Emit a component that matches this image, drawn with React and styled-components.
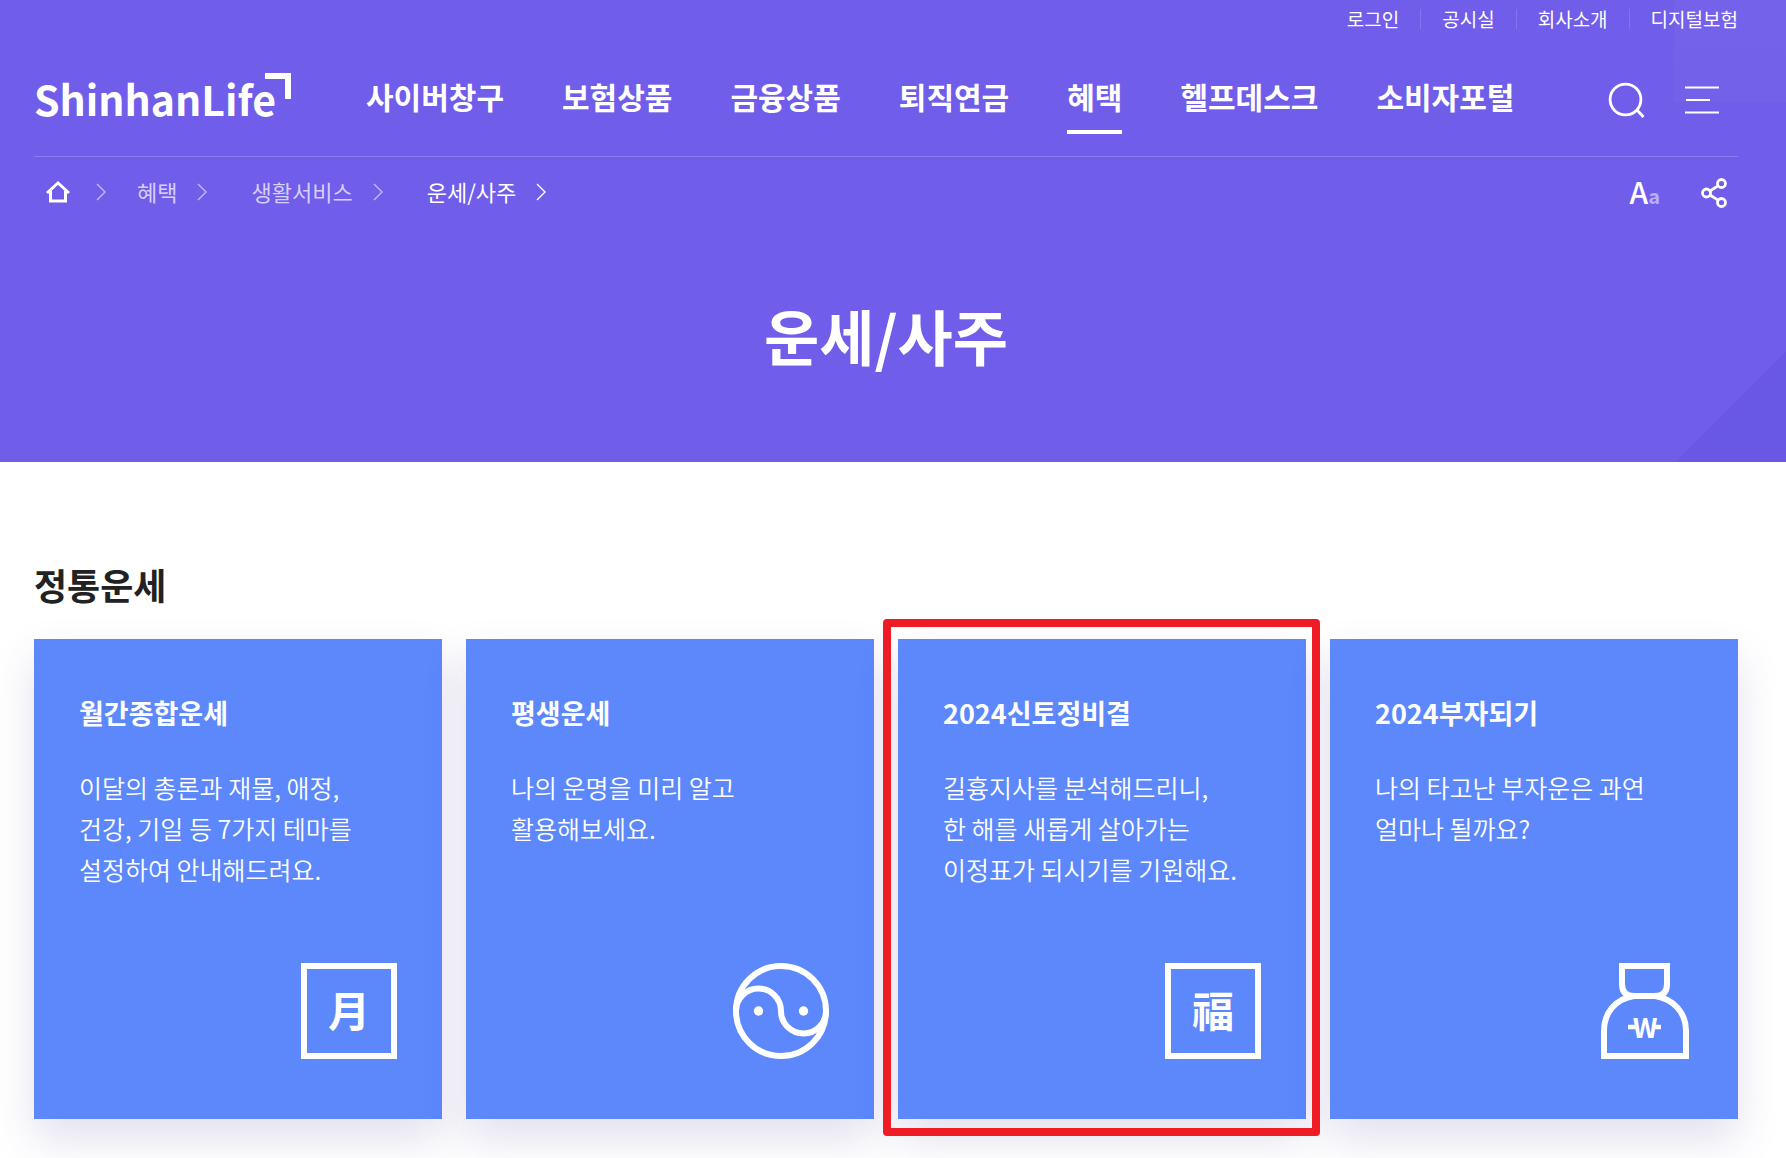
import React from "react";
import styled, { createGlobalStyle } from "styled-components";

const GlobalStyle = createGlobalStyle`
  * { box-sizing: border-box; }
  body {
    margin: 0;
    background: #fff;
    color: #222;
    font-family: "Noto Sans CJK KR", "Noto Sans", sans-serif;
  }
  a { color: inherit; text-decoration: none; }
  h1, h2, h3, p, ul, ol { margin: 0; padding: 0; }
  ul, ol { list-style: none; }
  button {
    padding: 0;
    border: 0;
    background: none;
    color: inherit;
    font: inherit;
    cursor: pointer;
  }
  svg { display: block; }
`;

const Hero = styled.header`
  padding: 0 48px 0 34px;
  color: #fff;
  background:
    linear-gradient(135deg, transparent 50%, #6957e6 50%) right bottom / 111px 111px no-repeat,
    linear-gradient(#7562eb, #7461ea) right top / 112px 102px no-repeat,
    #705dea;
`;

const UtilityMenu = styled.ul`
  display: flex;
  justify-content: flex-end;
  align-items: center;
  height: 40px;
  padding-bottom: 2px;
  font-size: 19px;
  line-height: 20px;

  li + li {
    margin-left: 21px;
    padding-left: 21px;
    border-left: 1px solid #8574ee;
  }
`;

const MainBar = styled.div`
  display: flex;
  align-items: center;
  height: 117px;
  border-bottom: 1px solid #8c7dee;
`;

const Logo = styled.a`
  position: relative;
  width: 257px;
  margin-right: 75px;
  font-size: 41px;
  font-weight: 700;
  line-height: 60px;
`;

const LogoMark = styled.span`
  position: absolute;
  top: 5px;
  right: 0;
  width: 26px;
  height: 26px;
  border: solid #fff;
  border-width: 6px 6px 0 0;
`;

const MainNav = styled.nav`
  display: flex;
  gap: 58px;
  font-size: 30px;
  font-weight: 700;
  line-height: 68px;
  white-space: nowrap;
`;

const NavLink = styled.a`
  border-bottom: 4px solid ${(p) => (p.$active ? "#fff" : "transparent")};
`;

const Tools = styled.div`
  display: flex;
  align-items: center;
  gap: ${(p) => p.$gap};
  margin-left: auto;
  padding-top: ${(p) => p.$top || "0"};
  padding-right: ${(p) => p.$end};
`;

const PathBar = styled.div`
  display: flex;
  align-items: center;
  height: 72px;
  padding-left: 12px;
`;

const Crumbs = styled.ol`
  display: flex;
  align-items: center;
  padding-bottom: 2px;
  font-size: 22px;
  line-height: 32px;
`;

const Crumb = styled.li`
  display: flex;
  align-items: center;
  gap: ${(p) => p.$gap || "20px"};
  margin-right: ${(p) => p.$after || "44px"};
  color: ${(p) => (p.$current ? "#fff" : "#d6cffa")};
`;

const CrumbLink = styled.a`
  padding-bottom: 2px;
`;

const TextSize = styled.button`
  display: flex;
  align-items: baseline;
  font-size: 30px;
  font-weight: 500;
  line-height: 36px;

  small {
    color: #b9aef5;
    font-size: 20px;
    font-weight: 700;
  }
`;

const PageTitle = styled.h1`
  padding: 58px 0 79px;
  font-size: 60px;
  font-weight: 700;
  line-height: 96px;
  text-align: center;
`;

const Main = styled.main`
  padding: 96px 48px 39px 34px;
`;

const SectionTitle = styled.h2`
  margin-bottom: 29px;
  font-size: 36px;
  font-weight: 700;
  line-height: 52px;
`;

const CardGrid = styled.ul`
  display: grid;
  grid-template-columns: repeat(4, 1fr);
  gap: 24px;
`;

const CardItem = styled.li`
  position: relative;
  display: flex;
`;

const Highlight = styled.span`
  position: absolute;
  z-index: 1;
  inset: -20px -14px -17px -15px;
  border: 8px solid #ee1c25;
  border-radius: 4px;
  pointer-events: none;
`;

const Card = styled.a`
  display: flex;
  flex: 1;
  flex-direction: column;
  min-height: 480px;
  padding: 56px 45px 60px;
  color: #fff;
  background: #5c88fc;
  box-shadow: 0 20px 40px rgba(66, 48, 138, 0.15);
`;

const CardTitle = styled.h3`
  margin-bottom: 36px;
  font-size: 27px;
  font-weight: 700;
  line-height: 36px;
`;

const CardText = styled.p`
  font-size: 25px;
  font-weight: 350;
  line-height: 41px;
  white-space: pre-line;
`;

const CardArt = styled.span`
  align-self: flex-end;
  margin-top: auto;
`;

const Seal = styled.span`
  display: flex;
  align-items: center;
  justify-content: center;
  width: 96px;
  height: 96px;
  padding-bottom: 4px;
  border: 6px solid #fff;
  font-size: 42px;
  font-weight: 700;
  line-height: 60px;
`;

const Won = styled.text`
  fill: #fff;
  font-family: "Noto Sans CJK KR", sans-serif;
  font-size: 27px;
  font-weight: 700;
`;

const Chevron = ({ dim }) => (
  <svg width="10" height="18" viewBox="0 0 10 18" fill="none" stroke={dim ? "#c3baf7" : "#fff"} strokeWidth="1.4" aria-hidden="true">
    <path d="M1 1l8 8-8 8" />
  </svg>
);

const HomeIcon = () => (
  <svg width="24" height="22" viewBox="0 0 24 22" fill="none" stroke="#fff" strokeWidth="3" aria-hidden="true">
    <path d="M1 12L12 2l11 10" />
    <path d="M4.5 10v10h15V10" />
  </svg>
);

const SearchIcon = () => (
  <svg width="37" height="36" viewBox="0 0 37 36" fill="none" stroke="#fff" strokeWidth="2.8" aria-hidden="true">
    <circle cx="17.5" cy="17.5" r="15.4" />
    <path d="M29 28l6.5 7" />
  </svg>
);

const MenuIcon = () => (
  <svg width="34" height="28" viewBox="0 0 34 28" fill="none" stroke="#fff" strokeWidth="2" aria-hidden="true">
    <path d="M0 1.5h34M1 14h24M0 26.5h34" />
  </svg>
);

const ShareIcon = () => (
  <svg width="26" height="30" viewBox="0 0 26 30" fill="none" stroke="#fff" strokeWidth="2.8" aria-hidden="true">
    <circle cx="5.5" cy="15" r="4" />
    <circle cx="20.5" cy="5.5" r="4" />
    <circle cx="20.5" cy="24.5" r="4" />
    <path d="M9 13l8-5.2M9 17l8 5.2" />
  </svg>
);

const YinYangIcon = () => (
  <svg width="96" height="96" viewBox="0 0 96 96" fill="none" stroke="#fff" strokeWidth="6" aria-hidden="true">
    <circle cx="48" cy="48" r="45" />
    <path d="M3 48a22.5 22.5 0 0 1 45 0a22.5 22.5 0 0 0 45 0" />
    <circle cx="25.5" cy="48" r="4.7" fill="#fff" stroke="none" />
    <circle cx="70.5" cy="48" r="4.7" fill="#fff" stroke="none" />
  </svg>
);

const MoneyBagIcon = () => (
  <svg width="96" height="96" viewBox="0 0 96 96" fill="none" stroke="#fff" strokeWidth="6" aria-hidden="true">
    <path d="M25 3h45v18q0 12-12 12H37q-12 0-12-12z" />
    <path d="M37 33C18 36 7 50 7 68v25h82V68C89 50 77 36 58 33z" />
    <path d="M31 64h9M55 64h9" strokeWidth="4.5" />
    <Won x="48" y="75" textAnchor="middle" stroke="none">W</Won>
  </svg>
);

const utilities = ["로그인", "공시실", "회사소개", "디지털보험"];
const menus = ["사이버창구", "보험상품", "금융상품", "퇴직연금", "혜택", "헬프데스크", "소비자포털"];

const fortunes = [
  {
    title: "월간종합운세",
    text: "이달의 총론과 재물, 애정,\n건강, 기일 등 7가지 테마를\n설정하여 안내해드려요.",
    art: <Seal>月</Seal>,
  },
  {
    title: "평생운세",
    text: "나의 운명을 미리 알고\n활용해보세요.",
    art: <YinYangIcon />,
  },
  {
    title: "2024신토정비결",
    text: "길흉지사를 분석해드리니,\n한 해를 새롭게 살아가는\n이정표가 되시기를 기원해요.",
    art: <Seal>福</Seal>,
    highlighted: true,
  },
  {
    title: "2024부자되기",
    text: "나의 타고난 부자운은 과연\n얼마나 될까요?",
    art: <MoneyBagIcon />,
  },
];

export default function App() {
  return (
    <>
      <GlobalStyle />
      <Hero>
        <UtilityMenu>
          {utilities.map((name) => (
            <li key={name}><a href="#">{name}</a></li>
          ))}
        </UtilityMenu>
        <MainBar>
          <Logo href="#">
            ShinhanLife
            <LogoMark />
          </Logo>
          <MainNav>
            {menus.map((name) => (
              <NavLink key={name} href="#" $active={name === "혜택"}>{name}</NavLink>
            ))}
          </MainNav>
          <Tools $gap="40px" $end="19px" $top="4px">
            <button aria-label="검색"><SearchIcon /></button>
            <button aria-label="전체 메뉴"><MenuIcon /></button>
          </Tools>
        </MainBar>
        <PathBar>
          <Crumbs>
            <Crumb $gap="26px" $after="31px">
              <a href="#" aria-label="홈"><HomeIcon /></a>
              <Chevron dim />
            </Crumb>
            <Crumb><CrumbLink href="#">혜택</CrumbLink><Chevron dim /></Crumb>
            <Crumb><CrumbLink href="#">생활서비스</CrumbLink><Chevron dim /></Crumb>
            <Crumb $current><CrumbLink href="#">운세/사주</CrumbLink><Chevron /></Crumb>
          </Crumbs>
          <Tools $gap="41px" $end="11px">
            <TextSize aria-label="글자 크기">A<small>a</small></TextSize>
            <button aria-label="공유"><ShareIcon /></button>
          </Tools>
        </PathBar>
        <PageTitle>운세/사주</PageTitle>
      </Hero>
      <Main>
        <SectionTitle>정통운세</SectionTitle>
        <CardGrid>
          {fortunes.map((item) => (
            <CardItem key={item.title}>
              <Card href="#">
                <CardTitle>{item.title}</CardTitle>
                <CardText>{item.text}</CardText>
                <CardArt>{item.art}</CardArt>
              </Card>
              {item.highlighted && <Highlight />}
            </CardItem>
          ))}
        </CardGrid>
      </Main>
    </>
  );
}
